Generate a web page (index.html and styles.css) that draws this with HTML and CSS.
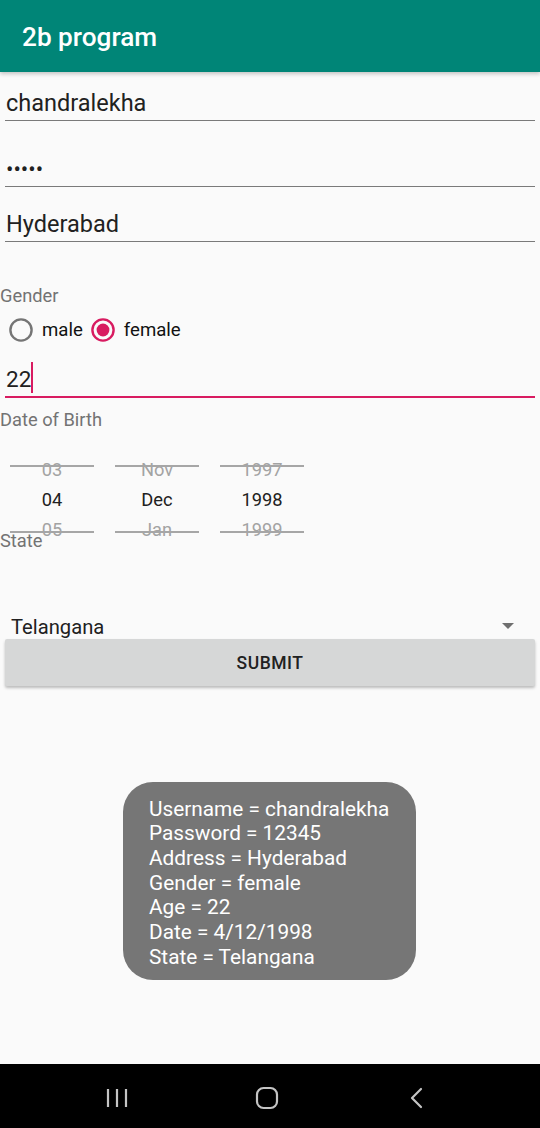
FILE: index.html
```html
<!DOCTYPE html>
<html>
<head>
<meta charset="utf-8">
<link rel="stylesheet" href="styles.css">
</head>
<body>
<div class="screen">
  <header class="appbar"><h1 class="title">2b program</h1></header>
  <main class="form">
    <div class="field f-user">chandralekha</div>
    <div class="field f-pass"><span class="dots">•••••</span></div>
    <div class="field f-addr">Hyderabad</div>
    <div class="label l-gender">Gender</div>
    <div class="radios">
      <svg class="radio r-male" width="26" height="26" viewBox="0 0 26 26"><circle cx="13" cy="13" r="10.6" fill="none" stroke="#757575" stroke-width="2.4"/></svg>
      <span class="rtext">male</span>
      <svg class="radio r-female" width="26" height="26" viewBox="0 0 26 26"><circle cx="13" cy="13" r="10.6" fill="none" stroke="#D81B60" stroke-width="2.4"/><circle cx="13" cy="13" r="6.4" fill="#D81B60"/></svg>
      <span class="rtext">female</span>
    </div>
    <div class="field f-age">22<span class="cursor"></span></div>
    <div class="label l-dob">Date of Birth</div>
    <div class="picker">
      <div class="pcol"><div class="prow dim">03</div><div class="prow sel">04</div><div class="prow dim">05</div></div>
      <div class="pcol"><div class="prow dim">Nov</div><div class="prow sel">Dec</div><div class="prow dim">Jan</div></div>
      <div class="pcol"><div class="prow dim">1997</div><div class="prow sel">1998</div><div class="prow dim">1999</div></div>
    </div>
    <div class="label l-state">State</div>
    <div class="spinner">
      <span class="stext">Telangana</span>
      <svg class="arrow" width="12" height="6" viewBox="0 0 12 6"><path d="M0 0H12L6 6Z" fill="#6f6f6f"/></svg>
    </div>
    <button class="submit">SUBMIT</button>
  </main>
  <div class="toast">
    <div>Username = chandralekha</div>
    <div>Password = 12345</div>
    <div>Address = Hyderabad</div>
    <div>Gender = female</div>
    <div>Age = 22</div>
    <div>Date = 4/12/1998</div>
    <div>State = Telangana</div>
  </div>
  <nav class="navbar">
    <div class="navitem">
      <svg width="22" height="20" viewBox="0 0 22 20"><path d="M2 1V19M11 1V19M20 1V19" stroke="#c4c4c4" stroke-width="2.2" fill="none"/></svg>
    </div>
    <div class="navitem">
      <svg width="24" height="24" viewBox="0 0 24 24"><rect x="2" y="2" width="20" height="20" rx="6.5" fill="none" stroke="#c4c4c4" stroke-width="2.2"/></svg>
    </div>
    <div class="navitem">
      <svg width="16" height="22" viewBox="0 0 16 22"><path d="M12 2L3 11L12 20" stroke="#c4c4c4" stroke-width="2.2" fill="none" stroke-linecap="round" stroke-linejoin="round"/></svg>
    </div>
  </nav>
</div>
</body>
</html>
```

FILE: styles.css
```css
* { box-sizing: border-box; }
html, body { margin: 0; padding: 0; }
body {
  font-family: Roboto, "Liberation Sans", sans-serif;
  background: #fafafa;
  color: #212121;
}
.screen {
  position: relative;
  width: 540px;
  height: 1128px;
  display: flex;
  flex-direction: column;
  overflow: hidden;
  background: #fafafa;
}
.appbar {
  height: 72px;
  flex: none;
  background: #008577;
  display: flex;
  align-items: center;
  padding-left: 22px;
  box-shadow: 0 2px 4px rgba(0,0,0,0.22);
  position: relative;
  z-index: 2;
}
.title {
  margin: 0;
  color: #ffffff;
  font-size: 26.2px;
  font-weight: 500;
  line-height: 30px;
  margin-top: 2px;
}
.form {
  flex: 1;
  padding: 0 5px;
  display: flex;
  flex-direction: column;
  align-items: stretch;
}
.field {
  font-size: 23.5px;
  line-height: 26px;
  height: 31px;
  padding: 0 0 4px 1px;
  border-bottom: 1px solid #7a7a7a;
  color: #212121;
  white-space: nowrap;
}
.f-user { margin-top: 18px; }
.f-pass { margin-top: 35px; }
.f-addr { margin-top: 24px; }
.dots { font-size: 22px; }
.f-age {
  margin-top: 20px;
  height: 32px;
  font-size: 22.5px;
  border-bottom: 2px solid #D81B60;
}
.cursor {
  display: inline-block;
  width: 2px;
  height: 31px;
  margin-top: -6px;
  margin-left: 0px;
  vertical-align: -5.5px;
  background: #D81B60;
}
.label {
  font-size: 18.3px;
  line-height: 21px;
  color: #737373;
}
.l-gender { margin-top: 43px; margin-left: -5px; }
.l-dob { margin-top: 11px; margin-left: -5px; }
.l-state { margin-left: -5px; position: relative; }
.radios {
  margin-top: 8px;
  height: 32px;
  display: flex;
  align-items: center;
  font-size: 18.6px;
  color: #111;
}
.radio { flex: none; display: block; }
.r-male { margin-left: 3px; }
.rtext { margin-left: 8px; }
.r-female { margin-left: 7px; }
.picker {
  margin-top: 25px;
  height: 75px;
  padding-left: 5px;
  display: grid;
  grid-template-columns: repeat(3, 84px);
  column-gap: 21px;
  align-items: start;
}
.pcol {
  position: relative;
  height: 90px;
}
.pcol::before, .pcol::after {
  content: "";
  position: absolute;
  left: 0;
  right: 0;
  height: 2px;
  background: #a6a6a6;
}
.pcol::before { top: 10px; }
.pcol::after { top: 76px; }
.prow {
  height: 30px;
  line-height: 30px;
  text-align: center;
  font-size: 18.3px;
}
.prow.dim { color: #a3a3a3; }
.prow.sel { color: #212121; }
.spinner {
  margin-top: 64px;
  height: 24px;
  display: flex;
  align-items: flex-start;
  justify-content: space-between;
  padding-left: 6px;
  padding-right: 21px;
}
.stext {
  font-size: 20.2px;
  line-height: 24px;
  color: #212121;
}
.arrow { margin-top: 8px; display: block; }
.submit {
  display: block;
  width: 100%;
  height: 47px;
  margin: 0;
  border: none;
  border-radius: 2px;
  background: #d6d7d7;
  box-shadow: 0 2px 3px rgba(0,0,0,0.25);
  font-family: Roboto, "Liberation Sans", sans-serif;
  font-size: 17.5px;
  font-weight: 500;
  letter-spacing: 0.5px;
  color: #212121;
  padding: 0;
}
.toast {
  position: absolute;
  top: 782px;
  left: 123px;
  width: 293px;
  height: 198px;
  border-radius: 30px;
  background: #767676;
  color: #ffffff;
  font-size: 20.8px;
  line-height: 24.67px;
  padding: 14.5px 0 0 26px;
  white-space: nowrap;
}
.navbar {
  flex: none;
  height: 64px;
  background: #000;
  display: grid;
  grid-template-columns: repeat(3, 150px);
  padding-left: 42px;
  padding-top: 4px;
  align-items: center;
  justify-items: center;
}
.navitem svg { display: block; }
```
